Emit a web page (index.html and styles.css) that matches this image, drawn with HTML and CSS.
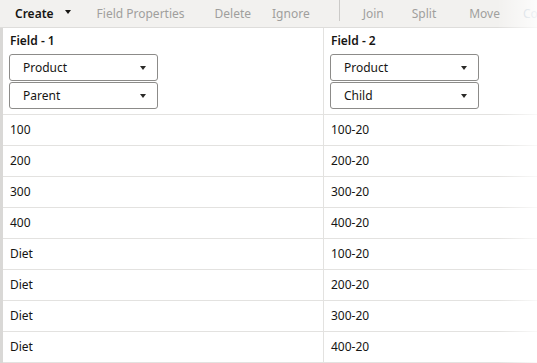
FILE: index.html
```html
<!DOCTYPE html>
<html lang="en">

<head>
    <meta charset="UTF-8">
    <title>Field mapping</title>
    <link rel="stylesheet" href="styles.css">
</head>

<body>
    <div id="page">
        <div class="toolbar">
            <span class="tool tool-main">Create</span>
            <span class="caret caret-dark"></span>
            <span class="tool tool-props">Field Properties</span>
            <span class="tool tool-delete">Delete</span>
            <span class="tool tool-ignore">Ignore</span>
            <span class="tool-sep"></span>
            <span class="tool tool-join">Join</span>
            <span class="tool tool-split">Split</span>
            <span class="tool tool-move">Move</span>
            <span class="tool tool-faint">Co</span>
        </div>

        <div class="table">
            <div class="row head">
                <div class="cell">
                    <div class="field-name">Field - 1</div>
                    <div class="select"><span>Product</span><i class="caret"></i></div>
                    <div class="select"><span>Parent</span><i class="caret"></i></div>
                </div>
                <div class="cell">
                    <div class="field-name">Field - 2</div>
                    <div class="select"><span>Product</span><i class="caret"></i></div>
                    <div class="select"><span>Child</span><i class="caret"></i></div>
                </div>
            </div>
            <div class="row"><div class="cell">100</div><div class="cell">100-20</div></div>
            <div class="row"><div class="cell">200</div><div class="cell">200-20</div></div>
            <div class="row"><div class="cell">300</div><div class="cell">300-20</div></div>
            <div class="row"><div class="cell">400</div><div class="cell">400-20</div></div>
            <div class="row"><div class="cell">Diet</div><div class="cell">100-20</div></div>
            <div class="row"><div class="cell">Diet</div><div class="cell">200-20</div></div>
            <div class="row"><div class="cell">Diet</div><div class="cell">300-20</div></div>
            <div class="row"><div class="cell">Diet</div><div class="cell">400-20</div></div>
        </div>

        <div class="fade"></div>
    </div>
</body>

</html>
```

FILE: styles.css
```css
* {
    padding: 0;
    margin: 0;
    box-sizing: border-box;
}

body {
    font-family: "Noto Sans", "Open Sans", sans-serif;
    font-size: 12px;
    color: #161513;
    background: #fff;
    overflow: hidden;
}

#page {
    position: relative;
    width: 537px;
    height: 363px;
    overflow: hidden;
}

/* toolbar */
.toolbar {
    display: flex;
    align-items: center;
    height: 28px;
    background: #f2f1ef;
    border-bottom: 1px solid #dedddb;
    white-space: nowrap;
}

.tool {
    color: #a09f9d;
    line-height: 27px;
}

.tool-main {
    color: #161513;
    font-weight: 600;
    margin-left: 15px;
}

.caret {
    display: inline-block;
    width: 0;
    height: 0;
    border-left: 3.5px solid transparent;
    border-right: 3.5px solid transparent;
    border-top: 4px solid #3a3a3a;
}

.caret-dark {
    margin-left: 11px;
    margin-top: -4px;
    border-top-color: #161513;
}

.tool-props { margin-left: 26px; }
.tool-delete { margin-left: 30px; }
.tool-ignore { margin-left: 21px; }

.tool-sep {
    align-self: flex-start;
    flex: none;
    width: 1px;
    height: 21px;
    background: #cbcac8;
    margin-left: 29px;
}

.tool-join { margin-left: 23px; }
.tool-split { margin-left: 28px; }
.tool-move { margin-left: 33px; }
.tool-faint { margin-left: 23px; color: #b9c6d2; }

/* table */
.table {
    border-left: 3px solid #d9d8d6;
}

.row {
    display: grid;
    grid-template-columns: 321px 1fr;
    height: 31px;
    border-bottom: 1px solid #e3e2e0;
}

.row .cell {
    padding: 0 7px;
    line-height: 30px;
    border-right: 1px solid #e3e2e0;
}

.row .cell:last-child {
    border-right: 0;
}

.row.head {
    height: 87px;
}

.row.head .cell {
    padding: 4px 6px 0;
    line-height: normal;
}

.field-name {
    font-weight: 600;
    height: 22px;
    padding-left: 1px;
    line-height: 18px;
}

.select {
    display: flex;
    align-items: center;
    justify-content: space-between;
    width: 149px;
    height: 27px;
    margin-bottom: 1px;
    padding: 0 11px 0 13px;
    border: 1px solid #8c8b89;
    border-radius: 3px;
    background: #fff;
}

.select .caret {
    border-top-color: #2b2a28;
}

.fade {
    position: absolute;
    top: 0;
    right: 0;
    width: 40px;
    height: 100%;
    background: linear-gradient(to right, rgba(255, 255, 255, 0), rgba(255, 255, 255, 0.8));
    pointer-events: none;
}
```
